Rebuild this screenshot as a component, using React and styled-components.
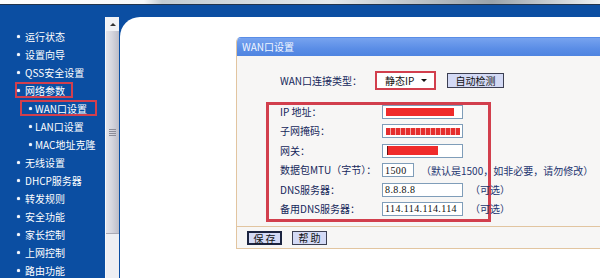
import React from "react";
import styled, { createGlobalStyle } from "styled-components";

const GlobalStyle = createGlobalStyle`
  html, body { margin: 0; padding: 0; background: #fff; }
  body {
    font-family: "Noto Sans CJK SC", "Liberation Sans", sans-serif;
    font-size: 10px;
  }
`;

const Screen = styled.div`
  width: 600px;
  height: 278px;
  overflow: hidden;
  display: flex;
  flex-direction: column;
  background: #0b4ea2;
`;

const TopStrip = styled.div`
  flex: none;
  height: 4px;
  background: linear-gradient(90deg, #fdfdfd 0%, #f7f8f9 24%, #c3ccd2 27%, #e4e9ec 55%, #9aa3aa 82%, #eef1f3 100%);
  border-bottom: 1px solid #22344c;
`;

const Main = styled.div`
  flex: 1;
  display: flex;
  min-height: 0;
`;

const Sidebar = styled.nav`
  flex: none;
  width: 105px;
  padding-top: 22px;
`;

const Item = styled.div`
  height: 18px;
  display: flex;
  align-items: center;
  padding-left: ${(p) => (p.$sub ? 20 : 15)}px;
  color: #fff;
  white-space: nowrap;
  line-height: 11px;
`;

const Mark = styled.span`
  display: inline-flex;
  align-items: center;
  box-sizing: border-box;
  height: 16px;
  gap: ${(p) => (p.$sub ? 3 : 5)}px;
  padding: 0 ${(p) => (p.$sub ? 8 : 6)}px 0 ${(p) => (p.$sub ? 7 : 0)}px;
  border: 2px solid ${(p) => (p.$active ? "#d23f4d" : "transparent")};
`;

const Dot = styled.span`
  width: 3px;
  height: 3px;
  border-radius: 50%;
  background: #f4f8ff;
  box-shadow: 0 0 1px #fff;
`;

const ScrollBar = styled.div`
  flex: none;
  width: 14px;
  margin-top: 12px;
  display: flex;
  flex-direction: column;
  background: #eeeff3;
  border-left: 1px solid #f8f8fa;
  box-sizing: border-box;
`;

const ScrollUp = styled.div`
  height: 14px;
  display: flex;
  align-items: center;
  justify-content: center;
  background: #f1f2f5;
  &::before {
    content: "";
    border-left: 3px solid transparent;
    border-right: 3px solid transparent;
    border-bottom: 3px solid #333;
  }
`;

const Thumb = styled.div`
  height: 202px;
  display: flex;
  align-items: center;
  justify-content: center;
  background: linear-gradient(90deg, #e4e4ea 0%, #d6d6de 45%, #bdbdc8 100%);
  border-bottom: 1px solid #a9a9b4;
`;

const Grip = styled.div`
  width: 7px;
  height: 7px;
  background: repeating-linear-gradient(180deg, #8c8c98 0 1px, transparent 1px 2px);
`;

const Content = styled.div`
  flex: 1;
  margin: 12px 0 0 1px;
  background: #fff;
  border-top-left-radius: 20px;
  overflow: hidden;
  padding: 20px 0 0 116px;
`;

const Panel = styled.section`
  width: 400px;
  border: 1px solid #e2c5a0;
  border-top-color: #5a8de6;
  border-radius: 5px 0 0 0;
  overflow: hidden;
`;

const Header = styled.div`
  height: 18px;
  line-height: 18px;
  padding-left: 5px;
  color: #f2f6ff;
  background: linear-gradient(180deg, #77a3ef 0%, #5a8de6 60%, #4f84e0 100%);
`;

const Body = styled.div`
  background: #f7f6f5;
  padding: 15px 0 4px 29px;
  border-bottom: 1px solid #e2c5a0;
`;

const TypeRow = styled.div`
  height: 19px;
  display: flex;
  align-items: center;
  padding-left: 14px;
`;

const Label = styled.span`
  flex: none;
  width: ${(p) => p.$w}px;
  color: #15265a;
  line-height: 14px;
  white-space: nowrap;
`;

const Select = styled.div`
  box-sizing: border-box;
  width: 61px;
  height: 19px;
  display: flex;
  align-items: center;
  padding: 0 7px 0 8px;
  background: #fff;
  border: 2px solid #d23f4d;
  color: #111;
  &::after {
    content: "";
    margin-left: auto;
    border-left: 3px solid transparent;
    border-right: 3px solid transparent;
    border-top: 3px solid #111;
  }
`;

const Button = styled.button`
  box-sizing: border-box;
  width: ${(p) => p.$w}px;
  height: ${(p) => p.$h}px;
  margin: 0;
  padding: 0;
  font: inherit;
  line-height: 12px;
  color: #111;
  background: #d4daf5;
  border: ${(p) => (p.$focus ? "2px solid #1c2440" : "1px solid #3c3f52")};
  white-space: pre;
`;

const DetectButton = styled(Button)`
  margin-left: 11px;
`;

const Group = styled.div`
  box-sizing: border-box;
  width: 225px;
  margin-top: 12px;
  padding: 0 0 3px 11px;
  border: 3px solid #d23f4d;
  display: flex;
  flex-direction: column;
  gap: 5.4px;
`;

const Row = styled.div`
  height: 14px;
  display: flex;
  align-items: center;
  white-space: nowrap;
`;

const Field = styled.div`
  flex: none;
  box-sizing: border-box;
  width: ${(p) => p.$w}px;
  height: 14px;
  display: flex;
  align-items: center;
  padding-left: 2px;
  background: #fff;
  border: 1px solid #7f9db9;
  font-family: "Liberation Serif", "Noto Sans CJK SC", serif;
  font-size: 10px;
  letter-spacing: 0.4px;
  color: #111;
`;

const Redact = styled.span`
  display: inline-block;
  width: ${(p) => p.$w}px;
  height: ${(p) => p.$h}px;
  margin-left: ${(p) => p.$x || 1}px;
  background: ${(p) =>
    p.$striped
      ? "repeating-linear-gradient(90deg, #e52d2d 0 4px, #f4a3a3 4px 5px)"
      : "#f02b2b"};
  border-left: ${(p) => (p.$mark ? "1px solid #6a1010" : "none")};
`;

const Hint = styled.span`
  margin-left: 7px;
  color: #1d3570;
  white-space: nowrap;
`;

const Footer = styled.div`
  height: 21px;
  box-sizing: border-box;
  padding: 4px 0 0 10px;
  display: flex;
  align-items: flex-start;
  gap: 10px;
  background: #f7f6f5;
`;

const menu = [
  { text: "运行状态" },
  { text: "设置向导" },
  { text: "QSS安全设置" },
  { text: "网络参数", active: true },
  { text: "WAN口设置", sub: true, active: true },
  { text: "LAN口设置", sub: true },
  { text: "MAC地址克隆", sub: true },
  { text: "无线设置" },
  { text: "DHCP服务器" },
  { text: "转发规则" },
  { text: "安全功能" },
  { text: "家长控制" },
  { text: "上网控制" },
  { text: "路由功能" },
];

export default function App() {
  return (
    <Screen>
      <GlobalStyle />
      <TopStrip />
      <Main>
        <Sidebar>
          {menu.map((m) => (
            <Item key={m.text} $sub={m.sub}>
              <Mark $sub={m.sub} $active={m.active}>
                <Dot />
                {m.text}
              </Mark>
            </Item>
          ))}
        </Sidebar>
        <ScrollBar>
          <ScrollUp />
          <Thumb>
            <Grip />
          </Thumb>
        </ScrollBar>
        <Content>
          <Panel>
            <Header>WAN口设置</Header>
            <Body>
              <TypeRow>
                <Label $w={95}>WAN口连接类型：</Label>
                <Select>静态IP</Select>
                <DetectButton $w={57} $h={15}>自动检测</DetectButton>
              </TypeRow>
              <Group>
                <Row>
                  <Label $w={102}>IP 地址：</Label>
                  <Field $w={81}>
                    <Redact $w={68} $h={8} />
                  </Field>
                </Row>
                <Row>
                  <Label $w={102}>子网掩码：</Label>
                  <Field $w={81}>
                    <Redact $w={74} $h={7} $striped />
                  </Field>
                </Row>
                <Row>
                  <Label $w={102}>网关：</Label>
                  <Field $w={81}>
                    <Redact $w={50} $h={9} $x={2} $mark />
                  </Field>
                </Row>
                <Row>
                  <Label $w={102}>数据包MTU（字节）：</Label>
                  <Field $w={32}>1500</Field>
                  <Hint>（默认是1500，如非必要，请勿修改）</Hint>
                </Row>
                <Row>
                  <Label $w={102}>DNS服务器：</Label>
                  <Field $w={81}>8.8.8.8</Field>
                  <Hint>（可选）</Hint>
                </Row>
                <Row>
                  <Label $w={102}>备用DNS服务器：</Label>
                  <Field $w={81}>114.114.114.114</Field>
                  <Hint>（可选）</Hint>
                </Row>
              </Group>
            </Body>
            <Footer>
              <Button $w={35} $h={14} $focus>保 存</Button>
              <Button $w={35} $h={14}>帮 助</Button>
            </Footer>
          </Panel>
        </Content>
      </Main>
    </Screen>
  );
}
